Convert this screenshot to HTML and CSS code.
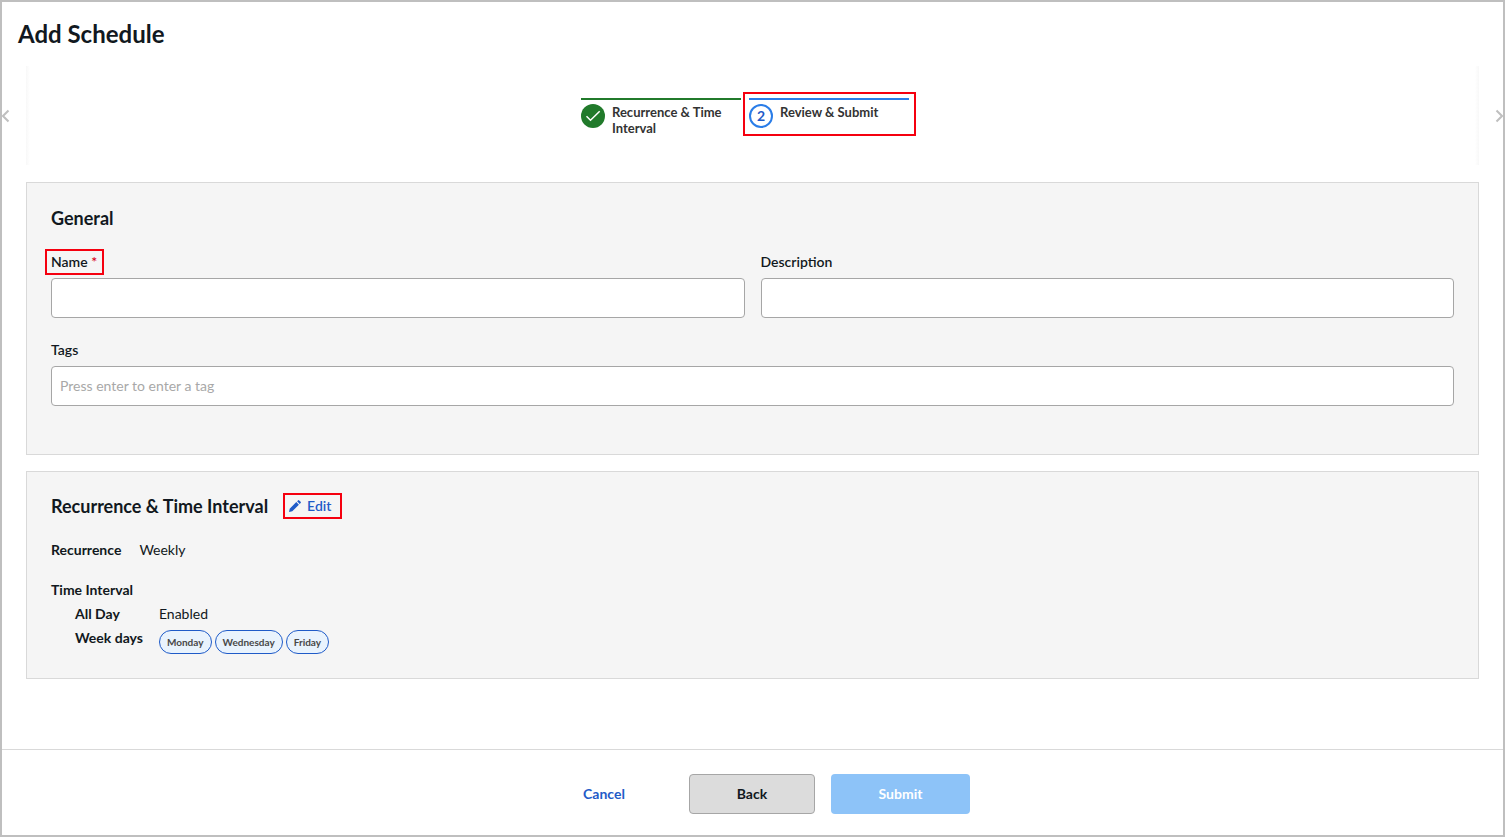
FILE: index.html
```html
<!DOCTYPE html>
<html lang="en">
<head>
<meta charset="utf-8">
<meta name="viewport" content="width=device-width, initial-scale=1">
<title>Add Schedule</title>
<link rel="stylesheet" href="styles.css">
</head>
<body>
<div class="page">
  <header class="page-header">
    <h1 class="page-title">Add Schedule</h1>
  </header>

  <nav class="wizard" aria-label="Progress">
    <button class="wizard-arrow wizard-arrow-prev" type="button" aria-label="Previous steps">
      <svg width="8" height="14" viewBox="0 0 8 14"><path d="M6.5 1.5 1 7l5.500 5.500"/></svg>
    </button>
    <ol class="steps">
      <li class="step step-done">
        <span class="step-marker">
          <svg width="24" height="24" viewBox="0 0 24 24" aria-hidden="true"><path d="M5.500 12.300l4 4L18.700 7.300"/></svg>
        </span>
        <span class="step-label">Recurrence &amp; Time Interval</span>
      </li>
      <li class="step step-current" aria-current="step">
        <span class="step-marker">2</span>
        <span class="step-label">Review &amp; Submit</span>
      </li>
    </ol>
    <button class="wizard-arrow wizard-arrow-next" type="button" aria-label="Next steps">
      <svg width="8" height="14" viewBox="0 0 8 14"><path d="M1.500 1.500 7 7l-5.500 5.500"/></svg>
    </button>
  </nav>

  <main class="content">
    <section class="panel panel-general">
      <h2 class="panel-title">General</h2>
      <div class="form-grid">
        <div class="field">
          <label class="field-label callout" for="name">Name <span class="required">*</span></label>
          <input class="field-input" id="name" type="text" required>
        </div>
        <div class="field">
          <label class="field-label" for="description">Description</label>
          <input class="field-input" id="description" type="text">
        </div>
        <div class="field field-wide">
          <label class="field-label" for="tags">Tags</label>
          <input class="field-input" id="tags" type="text" placeholder="Press enter to enter a tag">
        </div>
      </div>
    </section>

    <section class="panel panel-summary">
      <div class="panel-heading">
        <h2 class="panel-title">Recurrence &amp; Time Interval</h2>
        <button class="edit-button callout" type="button">
          <svg width="12" height="12" viewBox="0 0 12 12" aria-hidden="true"><path d="M0 12l.7-3.300L7.300 2.100l2.600 2.600L3.300 11.300zM8.100 1.300l.9-.9q.6-.6 1.200 0l1.400 1.400q.6.600 0 1.200l-.9.900z"/></svg>
          Edit
        </button>
      </div>
      <dl class="summary-line">
        <dt>Recurrence</dt>
        <dd>Weekly</dd>
      </dl>
      <h3 class="summary-title">Time Interval</h3>
      <dl class="summary-grid">
        <dt>All Day</dt>
        <dd>Enabled</dd>
        <dt>Week days</dt>
        <dd class="chips">
          <span class="chip">Monday</span>
          <span class="chip">Wednesday</span>
          <span class="chip">Friday</span>
        </dd>
      </dl>
    </section>
  </main>

  <footer class="actions">
    <button class="button button-link" type="button">Cancel</button>
    <button class="button button-secondary" type="button">Back</button>
    <button class="button button-primary" type="submit" disabled>Submit</button>
  </footer>
</div>
</body>
</html>
```
FILE: styles.css
```css
* {
  box-sizing: border-box;
}

body {
  margin: 0;
  background: #fff;
  color: #111820;
  font-family: Lato, "Liberation Sans", sans-serif;
  font-size: 14px;
  line-height: 24px;
}

h1, h2, h3, dl, dd, ol {
  margin: 0;
  padding: 0;
}

button, input {
  font: inherit;
}

button {
  margin: 0;
  padding: 0;
  border: 0;
  background: none;
}

.page {
  display: flex;
  flex-direction: column;
  min-height: 100vh;
  border: 2px solid #bfbfbf;
}

.page-header {
  padding: 16px;
}

.page-title {
  font-size: 24px;
  font-weight: 700;
  line-height: 32px;
}

.wizard {
  display: grid;
  grid-template-columns: 24px 1fr 24px;
  height: 99px;
}

.wizard-arrow {
  display: flex;
  align-items: center;
}

.wizard-arrow-next {
  justify-content: flex-end;
}

.wizard-arrow path {
  fill: none;
  stroke: #bfbfbf;
  stroke-width: 2;
}

.steps {
  display: flex;
  justify-content: center;
  align-items: flex-start;
  gap: 8px;
  padding: 32px 15px 0 0;
  list-style: none;
  background:
    linear-gradient(to right, #f8f8f8, #fff) left / 4px 100% no-repeat,
    linear-gradient(to left, #f8f8f8, #fff) right / 4px 100% no-repeat;
}

.step {
  position: relative;
  display: flex;
  gap: 7px;
  width: 160px;
  padding-top: 4px;
  border-top: 2px solid #217a2b;
}

.step-marker {
  display: flex;
  flex: none;
  align-items: center;
  justify-content: center;
  width: 24px;
  height: 24px;
  border-radius: 50%;
  font-weight: 700;
}

.step-label {
  color: #333;
  font-size: 13px;
  font-weight: 700;
  line-height: 16px;
}

.step-done .step-marker {
  background: #217a2b;
}

.step-done path {
  fill: none;
  stroke: #fff;
  stroke-width: 1.500;
}

.step-current {
  border-color: #2a7de8;
}

.step-current .step-marker {
  border: 2px solid #2a7de8;
  color: #1f5bc8;
}

.step-current::after {
  content: "";
  position: absolute;
  inset: -8px -7px -8px -6px;
  border: 2px solid #f5000f;
}

.content {
  display: flex;
  flex: 1;
  flex-direction: column;
  gap: 16px;
  padding: 17px 24px 24px;
}

.panel {
  padding: 22px 24px 48px;
  border: 1px solid #d9d9d9;
  background: #f5f5f5;
}

.panel-summary {
  padding: 21px 24px 24px;
}

.panel-title {
  font-size: 18px;
  font-weight: 700;
  line-height: 26px;
}

.panel-heading {
  display: flex;
  align-items: center;
  gap: 15px;
}

.form-grid {
  display: grid;
  grid-template-columns: 1fr 1fr;
  gap: 20px 16px;
  margin-top: 19px;
}

.field {
  display: flex;
  flex-direction: column;
  align-items: flex-start;
  gap: 4px;
}

.field-wide {
  grid-column: 1 / -1;
}

.field-label {
  font-weight: 600;
}

.required {
  color: #d9001b;
}

.callout {
  outline: 2px solid #f5000f;
}

.field-label.callout {
  margin: 0 -5px;
  padding: 0 6px 0 5px;
  outline-offset: -1px;
}

.field-input {
  width: 100%;
  height: 40px;
  padding: 0 8px 2px;
  border: 1px solid #a6a6a6;
  border-radius: 4px;
  background: #fff;
  color: inherit;
}

.field-input::placeholder {
  color: #a8a8a8;
  opacity: 1;
}

.edit-button {
  display: flex;
  align-items: center;
  gap: 6px;
  padding: 0 11px 0 6px;
  height: 26px;
  outline-offset: -2px;
  color: #1f5bc8;
  font-weight: 600;
}

.edit-button svg {
  fill: #1f5bc8;
}

.summary-line {
  display: flex;
  gap: 18px;
  margin: 19px 0 16px;
}

dt, .summary-title {
  font-size: 14px;
  font-weight: 700;
}

.summary-grid {
  display: grid;
  grid-template-columns: auto 1fr;
  column-gap: 16px;
  padding-left: 24px;
}

.chips {
  display: flex;
  gap: 3px;
  padding-top: 4px;
}

.chip {
  height: 24px;
  padding: 0 7px;
  border: 1px solid #1f5bc8;
  border-radius: 12px;
  background: #e9f3fd;
  color: #484848;
  font-size: 10px;
  font-weight: 700;
  line-height: 22px;
}

.actions {
  display: flex;
  justify-content: center;
  gap: 16px;
  padding: 24px 0 21px;
  border-top: 1px solid #d9d9d9;
}

.button {
  height: 40px;
  border-radius: 4px;
  font-weight: 700;
}

.button-link {
  width: 138px;
  color: #1f5bc8;
}

.button-secondary {
  width: 126px;
  border: 1px solid #a6a6a6;
  background: #dcdcdc;
  color: #111820;
}

.button-primary {
  width: 139px;
  background: #8dc3f8;
  color: #fff;
}
```
